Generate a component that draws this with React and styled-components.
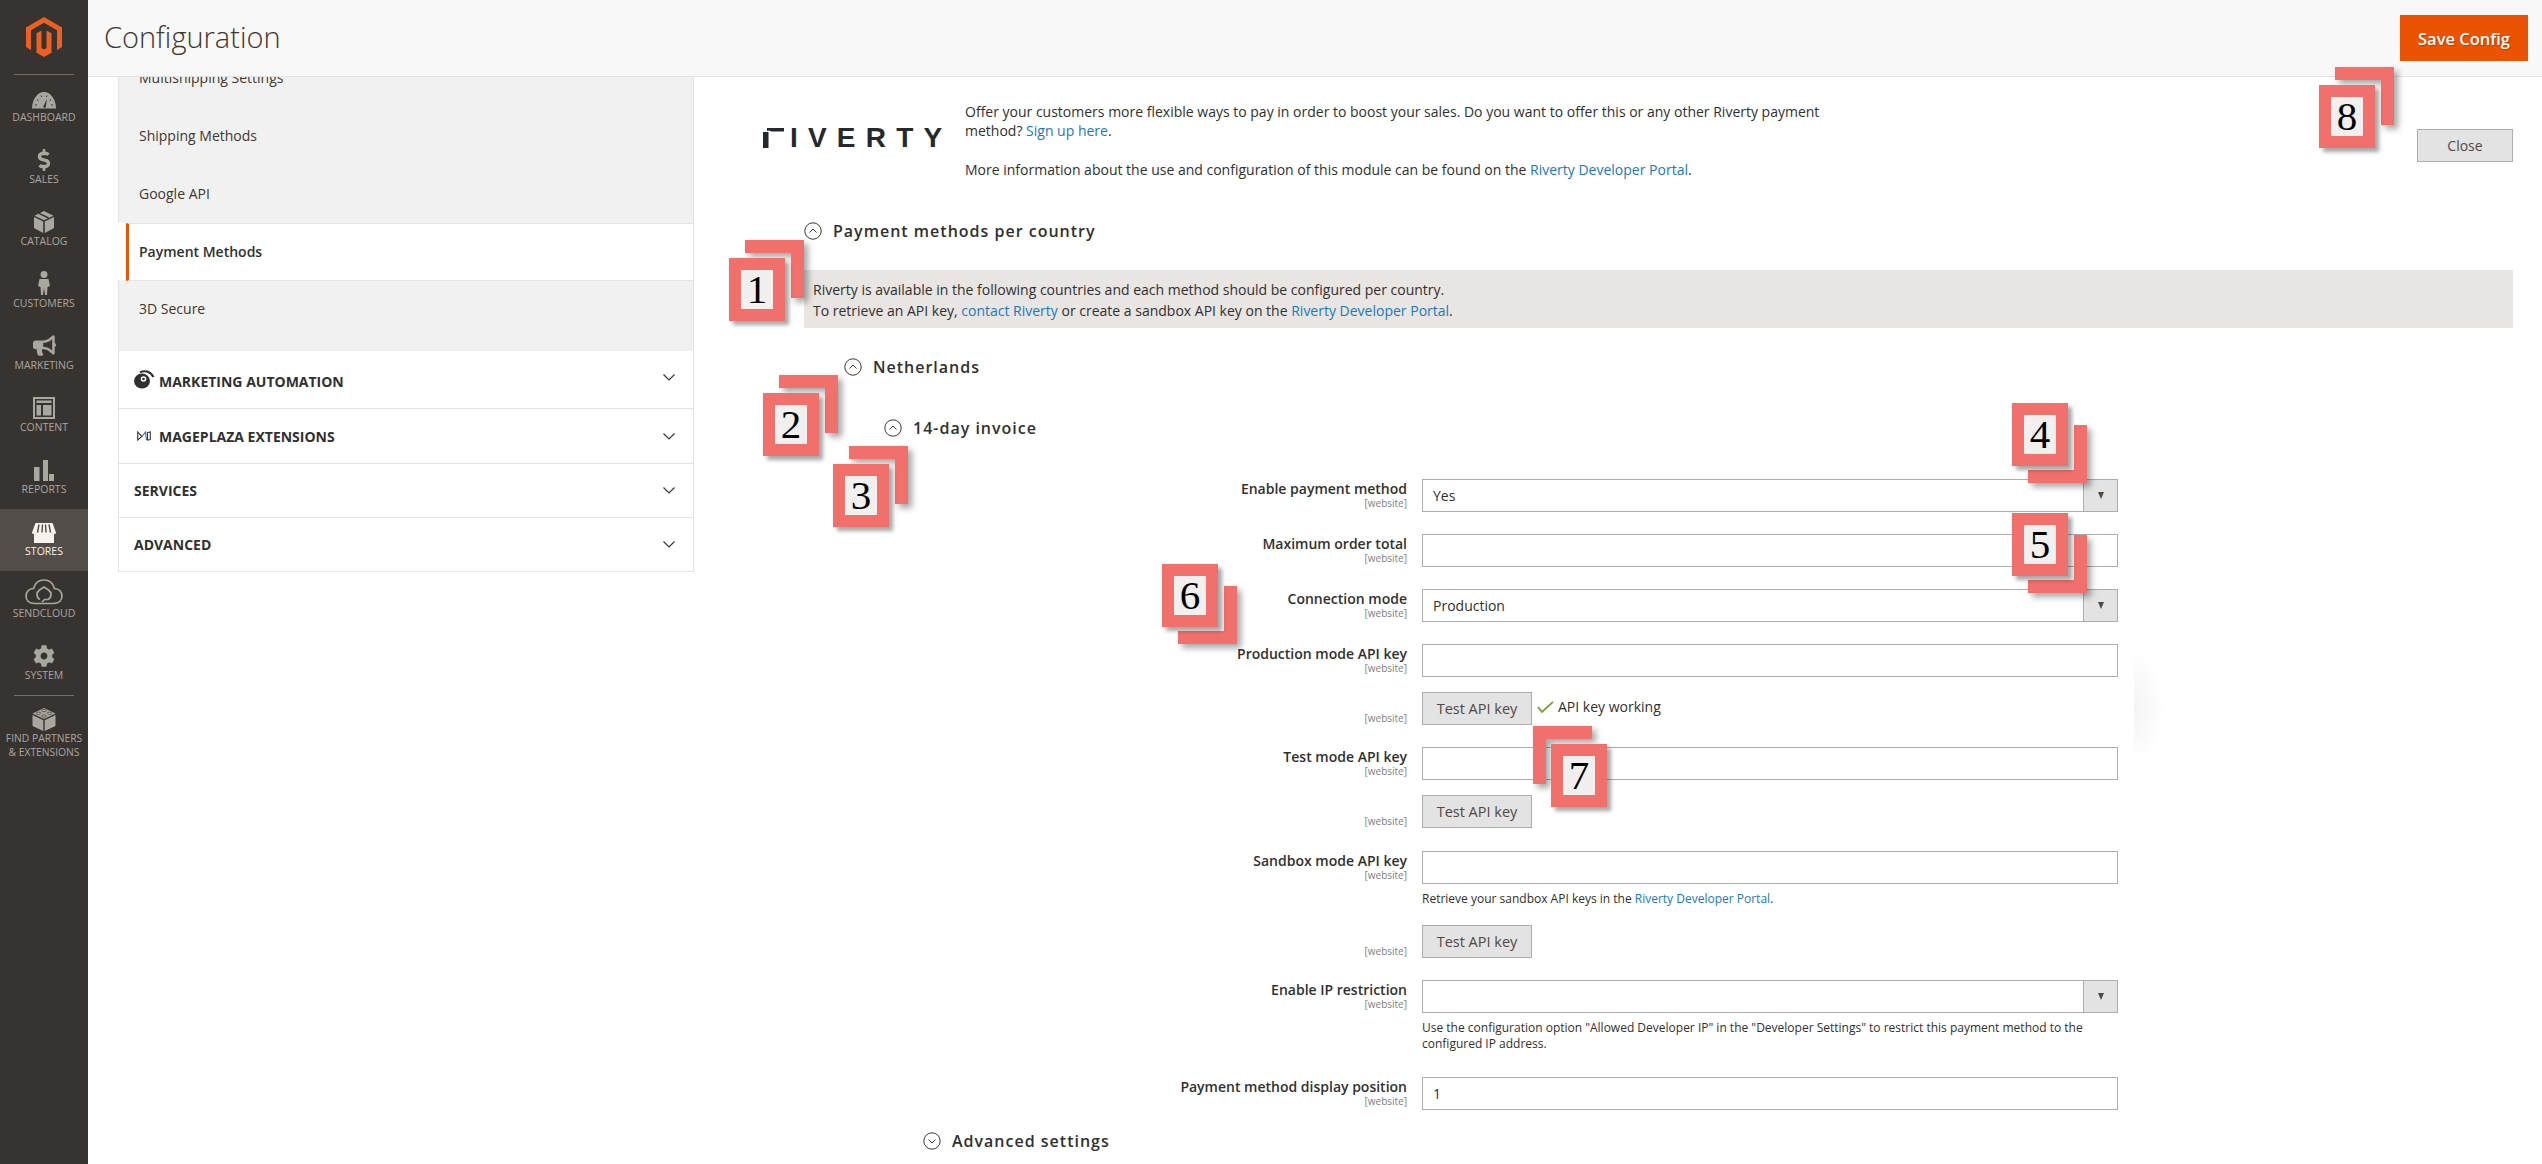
import React from 'react';
import styled, { createGlobalStyle } from 'styled-components';
import { FaCog, FaBullhorn, FaDollarSign } from 'react-icons/fa';

const Global = createGlobalStyle`
  html, body { margin: 0; padding: 0; background: #fff; }
  body { font-family: "Open Sans", "Liberation Sans", sans-serif; color: #303030; }
  * { box-sizing: border-box; }
`;

const Page = styled.div`
  display: flex; width: 2542px; height: 1164px; overflow: hidden; position: relative;
`;
const Sidebar = styled.nav`
  width: 88px; flex: none; background: #373330; display: flex; flex-direction: column;
`;
const LogoCell = styled.div`
  height: 75px; padding-top: 17px; margin: 0 14px; display: flex; justify-content: center;
  border-bottom: 1px solid #736e69;
`;
const NavItem = styled.div`
  height: 62px; display: flex; flex-direction: column; align-items: center;
  background: ${p => (p.$active ? '#524d49' : 'transparent')};
  color: ${p => (p.$active ? '#f7f3eb' : '#aaa6a0')};
`;
const NavIcon = styled.div`
  height: 36px; width: 100%; display: flex; align-items: flex-end; justify-content: center;
  padding-bottom: 2px;
`;
const NavLabel = styled.div`
  font-size: 10.5px; line-height: 14px; text-transform: uppercase; text-align: center; white-space: nowrap;
  margin-top: -1px;
`;
const PartnersItem = styled.div`
  margin: 0 14px; border-top: 1px solid #736e69; height: 80px; color: #aaa6a0;
  display: flex; flex-direction: column; align-items: center;
`;
const PartnersIcon = styled.div`
  height: 35px; display: flex; align-items: flex-end; justify-content: center;
`;
const PartnersLabel = styled.div`
  font-size: 10.3px; line-height: 14px; text-transform: uppercase; text-align: center; white-space: nowrap;
`;

const Main = styled.div`
  flex: 1; display: flex; flex-direction: column; min-width: 0;
`;
const Header = styled.header`
  height: 77px; flex: none; background: #f8f8f8; border-bottom: 1px solid #e3e3e3;
  display: flex; align-items: flex-start; justify-content: space-between;
  padding: 15px 14px 0 16px; position: relative; z-index: 1;
`;
const Title = styled.h1`
  margin: 0; font-size: 29px; line-height: 44px; font-weight: 300; color: #41362f;
`;
const SaveButton = styled.button`
  width: 128px; height: 46px; border: 0; background: #eb5202; color: #fff;
  font: 600 16.5px "Open Sans", sans-serif; text-shadow: 1px 1px 1px rgba(0,0,0,.25); padding: 0;
`;
const Body = styled.div`
  flex: 1; display: flex; min-height: 0; overflow: hidden; padding-left: 30px;
`;
const LeftPanel = styled.aside`
  width: 576px; flex: none; margin-top: -28px;
`;
const TabGroup = styled.div`
  background: #f1f1f1; border-left: 1px solid #e3e3e3; border-right: 1px solid #e3e3e3;
  padding-bottom: ${p => p.$pb || 0}px;
`;
const Tab = styled.div`
  height: 58px; padding: 0 0 1px 20px; display: flex; align-items: center; font-size: 14px; color: #41362f;
`;
const ActiveTab = styled.div`
  height: 58px; background: #fff; margin-left: 8px; padding: 0 0 1px 10px; display: flex; align-items: center;
  border-left: 3px solid #eb5202; border-top: 1px solid #e3e3e3; border-bottom: 1px solid #e3e3e3;
  border-right: 1px solid #e3e3e3; font-size: 14px; font-weight: 600; color: #303030; margin-bottom: -1px; position: relative;
`;
const SectionRow = styled.div`
  height: ${p => p.$h}px; display: flex; align-items: center; justify-content: space-between;
  padding: 0 18px 0 15px; border: 1px solid #e3e3e3; border-top: 0;
  &:first-of-type { border-top: 1px solid #e3e3e3; }
`;
const SectionTitle = styled.div`
  display: flex; align-items: center; font-size: 14px; font-weight: 700; text-transform: uppercase; color: #303030;
  padding-top: ${p => (p.$tall ? 4 : 0)}px;
`;
const SectionIcon = styled.span`
  width: 25px; display: inline-flex; align-items: center; justify-content: ${p => (p.$center ? 'center' : 'flex-start')};
  padding-right: ${p => (p.$center ? 5 : 0)}px; margin-top: ${p => p.$mt || 0}px;
`;
const Chevron = styled.svg`
  margin-bottom: ${p => (p.$tall ? 5 : 0)}px;
`;

const Right = styled.section`
  flex: 1; min-width: 0; padding: 25px 29px 0 110px;
`;
const IntroRow = styled.div`
  display: flex; align-items: flex-start; margin-left: -41px;
`;
const RivertyLogo = styled.div`
  width: 202px; flex: none; display: flex; align-items: center; gap: 6px; margin-top: 26px; height: 20px; color: #25282c;
`;
const LogoWord = styled.span`
  font: 700 28px/20px "Liberation Sans", sans-serif; letter-spacing: 10.2px; white-space: nowrap;
`;
const IntroText = styled.div`
  width: 880px; flex: none; font-size: 14px; line-height: 19px; color: #303030;
`;
const Para = styled.p`
  margin: 0 0 ${p => p.$mb || 0}px;
`;
const Link = styled.a`
  color: #1979c3; text-decoration: none;
`;
const CloseButton = styled.button`
  margin: 27px 0 0 auto; width: 96px; height: 33px; background: #e3e3e3; border: 1px solid #adadad;
  color: #514943; font: 400 14px "Open Sans", sans-serif; padding: 0;
`;
const Head = styled.div`
  display: flex; align-items: center; gap: 3px; height: 24px; margin-top: ${p => p.$top}px; margin-left: ${p => p.$indent}px;
  font-size: 16px; font-weight: 600; color: #303030; letter-spacing: 1px; white-space: nowrap;
`;
const Circle = styled.svg`
  flex: none; margin-right: ${p => p.$mr || 0}px;
`;
const Notice = styled.div`
  margin-top: 27px; height: 58px; background: #e8e5e2; padding: 9px 9px; font-size: 14px; line-height: 21px; color: #303030;
`;
const FormStack = styled.div`
  margin-top: 39px;
`;
const FormRow = styled.div`
  display: grid; grid-template-columns: 603px 696px; column-gap: 15px; margin-top: ${p => p.$top || 0}px;
`;
const LabelCell = styled.div`
  text-align: right; padding-top: ${p => p.$pt || 0}px;
`;
const Label = styled.div`
  font-size: 14px; line-height: 19px; font-weight: 600; color: #303030;
`;
const Scope = styled.div`
  font-size: 10px; line-height: 11px; color: #808080;
`;
const Input = styled.div`
  height: 33px; border: 1px solid #adadad; background: #fff; padding: 0 10px; display: flex; align-items: center;
  font-size: 14px; color: #303030;
`;
const Select = styled.div`
  height: 33px; border: 1px solid #adadad; background: #fff; padding-left: 10px; display: flex; align-items: center;
  justify-content: space-between; font-size: 14px; color: #303030;
`;
const SelectArrow = styled.span`
  width: 34px; height: 100%; background: #e3e3e3; border-left: 1px solid #adadad; display: flex; align-items: center; justify-content: center;
  &::after { content: ''; border-left: 3.5px solid transparent; border-right: 3.5px solid transparent; border-top: 7px solid #514943; }
`;
const ButtonLine = styled.div`
  display: flex; align-items: flex-start; gap: 5px;
`;
const TestButton = styled.button`
  width: 110px; height: 33px; background: #e3e3e3; border: 1px solid #adadad; color: #514943;
  font: 400 14.5px "Open Sans", sans-serif; padding: 0;
`;
const Status = styled.span`
  display: flex; align-items: center; gap: 4px; font-size: 14px; line-height: 18px; margin-top: 6px; color: #303030;
`;
const Help = styled.div`
  margin-top: 7px; font-size: 12px; line-height: 16px; color: #303030;
`;

const FaintShadow = styled.div`
  position: absolute; left: 2134px; top: 650px; width: 30px; height: 110px;
  background: radial-gradient(ellipse 100% 50% at 0 52%, #f4f4f4, #ffffff 100%);
`;
const Callout = styled.div`
  position: absolute; left: ${p => p.$x}px; top: ${p => p.$y}px; width: 56px; height: 63px; z-index: 5;
`;
const CornerMark = styled.div`
  position: absolute; width: 59px; height: 58px;
  left: ${p => (p.$v === 'tl' ? -18 : 16)}px; top: ${p => (p.$v === 'br' ? 22 : -18)}px;
  border-top: ${p => (p.$v === 'br' ? 0 : 13)}px solid #f1706b;
  border-bottom: ${p => (p.$v === 'br' ? 13 : 0)}px solid #f1706b;
  border-right: ${p => (p.$v === 'tl' ? 0 : 13)}px solid #f1706b;
  border-left: ${p => (p.$v === 'tl' ? 13 : 0)}px solid #f1706b;
  filter: drop-shadow(4px 4px 3px rgba(0,0,0,.35));
`;
const NumberBox = styled.div`
  position: absolute; inset: 0; border: 12px solid #f1706b; background: #f1f0ef; display: flex; align-items: center; justify-content: center;
  font: 400 41px/1 "Liberation Serif", serif; color: #000; box-shadow: 4px 4px 4px rgba(0,0,0,.35);
`;

const Magento = () => (
  <svg width="36" height="40" viewBox="0 0 36 40" fill="#ed6022">
    <path d="M18 0 0 10.4v19.7l5 2.9V13.3l13-7.5 13 7.5V33l5-2.9V10.4z" />
    <path d="M15.5 13.4l-5 2.9v19.4L18 40l7.5-4.3V16.3l-5-2.9v17.5L18 32.4l-2.5-1.5z" />
  </svg>
);
const Gauge = () => (
  <svg width="24" height="17" viewBox="0 0 24 17">
    <path d="M0 16.5C0 7.5 5.5 0 12 0s12 7.5 12 16.5z" fill="currentColor" />
    <path d="M3 13h2M5 7.5l1.5 1M9 3.5l.7 1.5M15 3.5l-.7 1.5M19 7.5l-1.5 1M21 13h-2" stroke="#373330" strokeWidth="1" fill="none" />
    <path d="M11 15l4-8-1.5 9z" fill="#373330" />
  </svg>
);
const BoxIcon = () => (
  <svg width="20" height="22" viewBox="0 0 20 22" fill="currentColor">
    <path d="M10 0 19.5 4.7 10 9.2.5 4.7z" />
    <path d="M0 6l9.2 4.4V22L0 17z" />
    <path d="M20 6l-9.2 4.4V22L20 17z" />
    <path d="M5 2.4l9.6 4.6" stroke="#373330" strokeWidth="1.4" />
  </svg>
);
const Person = () => (
  <svg width="12" height="24" viewBox="0 0 12 24" fill="currentColor">
    <circle cx="6" cy="3.5" r="3.5" />
    <path d="M1.5 8h9L12 15l-2.5 1-.5 8H7l-1-7-1 7H3l-.5-8L0 15z" />
  </svg>
);
const Layout = () => (
  <svg width="22" height="22" viewBox="0 0 22 22" fill="none">
    <rect x="1" y="1" width="20" height="20" stroke="currentColor" strokeWidth="2" />
    <rect x="3.5" y="3.5" width="15" height="2.5" fill="currentColor" />
    <rect x="3.5" y="8" width="4.5" height="10.5" fill="currentColor" />
    <rect x="10" y="8" width="8.5" height="10.5" fill="currentColor" />
  </svg>
);
const Bars = () => (
  <svg width="20" height="21" viewBox="0 0 20 21" fill="currentColor">
    <rect x="0" y="7" width="5.5" height="14" />
    <rect x="9" y="0" width="5" height="21" />
    <rect x="15" y="14" width="5" height="7" />
  </svg>
);
const Store = () => (
  <svg width="24" height="20" viewBox="0 0 24 20" fill="currentColor">
    <path d="M3.5 0h17L24 9.5c0 1-1 1.5-2 1.5H2c-1 0-2-.5-2-1.5z" />
    <path d="M7 1.5 5.5 9.5M10.5 1.5 10 9.5M13.5 1.5 14 9.5M17 1.5l1.5 8" stroke="#524d49" strokeWidth="1.4" />
    <rect x="2" y="11" width="20" height="9" />
  </svg>
);
const CloudIcon = () => (
  <svg width="38" height="26" viewBox="0 0 38 26" fill="none" stroke="currentColor" strokeWidth="1.7">
    <path d="M10 24.5C4 24.5 1 21 1 17s3-7.5 7.5-7.5C10 4 14 1 19 1s9 3 10.5 8.5c4.5 0 7.500 3.5 7.500 7.500s-3 7.500-9 7.500z" />
    <path d="M15 20.500c-2-1-3-3-3-5s1-3.500 2.500-4.500L19 8l4.500 3c1.500 1 2.500 2.500 2.500 4.500s-1 4-3 5h-3" />
    <path d="M17 23l3-3" />
  </svg>
);
const Lego = () => (
  <svg width="24" height="24" viewBox="0 0 24 24" fill="currentColor">
    <path d="M12 1 23.500 6.500 12 12 .5 6.500z" />
    <path d="M.5 8 11.300 13.200V24L.5 19z" />
    <path d="M23.500 8 12.700 13.200V24l10.800-5z" />
    <g fill="none" stroke="#373330" strokeWidth=".6">
      <ellipse cx="12" cy="3.600" rx="2.400" ry="1.200" />
      <ellipse cx="6.500" cy="6.300" rx="2.400" ry="1.200" />
      <ellipse cx="17.500" cy="6.300" rx="2.400" ry="1.200" />
      <ellipse cx="12" cy="9" rx="2.400" ry="1.200" />
    </g>
  </svg>
);
const ChevronDown = ({ tall }) => (
  <Chevron $tall={tall} width="12" height="7" viewBox="0 0 12 7" fill="none" stroke="#41362f" strokeWidth="1.2">
    <path d="M.5.500 6 6l5.500-5.500" />
  </Chevron>
);
const CircleUp = ({ mr }) => (
  <Circle $mr={mr} width="18" height="18" viewBox="0 0 18 18" fill="none" stroke="#41362f" strokeWidth="1">
    <circle cx="9" cy="9" r="8.200" />
    <path d="M5.500 10.500 9 7l3.500 3.500" />
  </Circle>
);
const CircleDown = ({ mr }) => (
  <Circle $mr={mr} width="18" height="18" viewBox="0 0 18 18" fill="none" stroke="#41362f" strokeWidth="1">
    <circle cx="9" cy="9" r="8.200" />
    <path d="M5.500 7.500 9 11l3.500-3.500" />
  </Circle>
);
const AutomationIcon = () => (
  <svg width="21" height="19" viewBox="0 0 21 19">
    <ellipse cx="8" cy="11" rx="8" ry="7.500" fill="#303030" />
    <circle cx="9.500" cy="9" r="2.800" fill="#fff" />
    <circle cx="9.500" cy="9" r="1.300" fill="#303030" />
    <path d="M6 2.500C10 0 16 1 19.500 7" fill="none" stroke="#303030" strokeWidth="2" />
  </svg>
);
const MageplazaIcon = () => (
  <svg width="14" height="10" viewBox="0 0 14 10" fill="none" strokeWidth="1.100">
    <path d="M.7 1v8L5 5.500z" stroke="#41362f" />
    <path d="M5 5.500 8.500 1 9.500 9" stroke="#2a6fa8" />
    <path d="M10.500 1.500 13.300 1v7.500l-2.800.5z" stroke="#41362f" />
  </svg>
);
const Check = () => (
  <svg width="17" height="12" viewBox="0 0 17 12" fill="none" stroke="#79a22e" strokeWidth="1.800">
    <path d="M1 6l4 5L16 .8" />
  </svg>
);

const nav = [
  ['Dashboard', <Gauge />],
  ['Sales', <FaDollarSign size={22} />],
  ['Catalog', <BoxIcon />],
  ['Customers', <Person />],
  ['Marketing', <FaBullhorn size={23} />],
  ['Content', <Layout />],
  ['Reports', <Bars />],
  ['Stores', <Store />, true],
  ['Sendcloud', <CloudIcon />],
  ['System', <FaCog size={22} />],
];

const callouts = [
  { n: 1, x: 729, y: 258, v: 'tr' },
  { n: 2, x: 763, y: 393, v: 'tr' },
  { n: 3, x: 833, y: 464, v: 'tr' },
  { n: 4, x: 2012, y: 403, v: 'br' },
  { n: 5, x: 2012, y: 513, v: 'br' },
  { n: 6, x: 1162, y: 564, v: 'br' },
  { n: 7, x: 1551, y: 744, v: 'tl' },
  { n: 8, x: 2319, y: 85, v: 'tr' },
];

const Site = ({ pt }) => (
  <LabelCell $pt={pt}><Scope>[website]</Scope></LabelCell>
);
const FieldLabel = ({ children }) => (
  <LabelCell>
    <Label>{children}</Label>
    <Scope>[website]</Scope>
  </LabelCell>
);

export default function App() {
  return (
    <Page>
      <Global />
      <Sidebar>
        <LogoCell><Magento /></LogoCell>
        {nav.map(([label, icon, active]) => (
          <NavItem key={label} $active={active}>
            <NavIcon>{icon}</NavIcon>
            <NavLabel>{label}</NavLabel>
          </NavItem>
        ))}
        <PartnersItem>
          <PartnersIcon><Lego /></PartnersIcon>
          <PartnersLabel>Find Partners<br />&amp; Extensions</PartnersLabel>
        </PartnersItem>
      </Sidebar>
      <Main>
        <Header>
          <Title>Configuration</Title>
          <SaveButton>Save Config</SaveButton>
        </Header>
        <Body>
          <LeftPanel>
            <TabGroup>
              <Tab>Multishipping Settings</Tab>
              <Tab>Shipping Methods</Tab>
              <Tab>Google API</Tab>
            </TabGroup>
            <ActiveTab>Payment Methods</ActiveTab>
            <TabGroup $pb={13}>
              <Tab>3D Secure</Tab>
            </TabGroup>
            <SectionRow $h={58}>
              <SectionTitle $tall><SectionIcon $mt={-4}><AutomationIcon /></SectionIcon>Marketing Automation</SectionTitle>
              <ChevronDown tall />
            </SectionRow>
            <SectionRow $h={55}>
              <SectionTitle><SectionIcon $center><MageplazaIcon /></SectionIcon>Mageplaza Extensions</SectionTitle>
              <ChevronDown />
            </SectionRow>
            <SectionRow $h={54}>
              <SectionTitle>Services</SectionTitle>
              <ChevronDown />
            </SectionRow>
            <SectionRow $h={54}>
              <SectionTitle>Advanced</SectionTitle>
              <ChevronDown />
            </SectionRow>
          </LeftPanel>
          <Right>
            <IntroRow>
              <RivertyLogo>
                <svg width="21" height="20" viewBox="0 0 21 20" fill="#25282c">
                  <path d="M0 4h5.500v16H0z" />
                  <path d="M4 0h17v3.500H8.500L6 2.500 4 3z" />
                </svg>
                <LogoWord>IVERTY</LogoWord>
              </RivertyLogo>
              <IntroText>
                <Para $mb={20}>Offer your customers more flexible ways to pay in order to boost your sales. Do you want to offer this or any other Riverty payment method? <Link>Sign up here</Link>.</Para>
                <Para>More information about the use and configuration of this module can be found on the <Link>Riverty Developer Portal</Link>.</Para>
              </IntroText>
              <CloseButton>Close</CloseButton>
            </IntroRow>
            <Head $top={40} $indent={0}><CircleUp mr={8} />Payment methods per country</Head>
            <Notice>
              Riverty is available in the following countries and each method should be configured per country.<br />
              To retrieve an API key, <Link>contact Riverty</Link> or create a sandbox API key on the <Link>Riverty Developer Portal</Link>.
            </Notice>
            <Head $top={27} $indent={40}><CircleUp mr={8} />Netherlands</Head>
            <Head $top={37} $indent={80}><CircleUp mr={8} />14-day invoice</Head>
            <FormStack>
              <FormRow>
                <FieldLabel>Enable payment method</FieldLabel>
                <Select>Yes<SelectArrow /></Select>
              </FormRow>
              <FormRow $top={22}>
                <FieldLabel>Maximum order total</FieldLabel>
                <Input />
              </FormRow>
              <FormRow $top={22}>
                <FieldLabel>Connection mode</FieldLabel>
                <Select>Production<SelectArrow /></Select>
              </FormRow>
              <FormRow $top={22}>
                <FieldLabel>Production mode API key</FieldLabel>
                <Input />
              </FormRow>
              <FormRow $top={15}>
                <Site pt={21} />
                <ButtonLine>
                  <TestButton>Test API key</TestButton>
                  <Status><Check />API key working</Status>
                </ButtonLine>
              </FormRow>
              <FormRow $top={22}>
                <FieldLabel>Test mode API key</FieldLabel>
                <Input />
              </FormRow>
              <FormRow $top={15}>
                <Site pt={21} />
                <ButtonLine><TestButton>Test API key</TestButton></ButtonLine>
              </FormRow>
              <FormRow $top={23}>
                <FieldLabel>Sandbox mode API key</FieldLabel>
                <div>
                  <Input />
                  <Help>Retrieve your sandbox API keys in the <Link>Riverty Developer Portal</Link>.</Help>
                </div>
              </FormRow>
              <FormRow $top={18}>
                <Site pt={21} />
                <ButtonLine><TestButton>Test API key</TestButton></ButtonLine>
              </FormRow>
              <FormRow $top={22}>
                <FieldLabel>Enable IP restriction</FieldLabel>
                <div>
                  <Select><span /><SelectArrow /></Select>
                  <Help>Use the configuration option "Allowed Developer IP" in the "Developer Settings" to restrict this payment method to the configured IP address.</Help>
                </div>
              </FormRow>
              <FormRow $top={25}>
                <FieldLabel>Payment method display position</FieldLabel>
                <Input>1</Input>
              </FormRow>
            </FormStack>
            <Head $top={19} $indent={119}><CircleDown mr={8} />Advanced settings</Head>
          </Right>
        </Body>
      </Main>
      <FaintShadow />
      {callouts.map(c => (
        <Callout key={c.n} $x={c.x} $y={c.y}>
          <CornerMark $v={c.v} />
          <NumberBox>{c.n}</NumberBox>
        </Callout>
      ))}
    </Page>
  );
}
